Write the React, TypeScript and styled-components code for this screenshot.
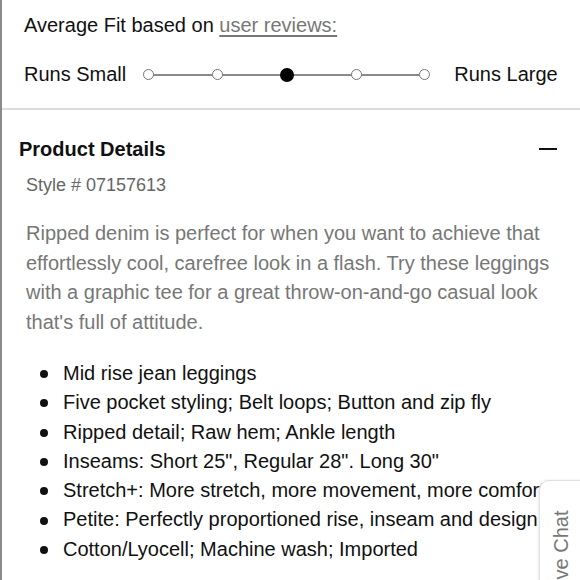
import styled, { createGlobalStyle } from "styled-components";

const GlobalStyle = createGlobalStyle`
  body {
    margin: 0;
    background: #ffffff;
    font-family: "Liberation Sans", Arial, sans-serif;
  }
`;

const Page = styled.div`
  position: relative;
  width: 580px;
  height: 580px;
  overflow: hidden;
  border-left: 2px solid #8a8a8a;
  box-sizing: border-box;
`;

const FitSection = styled.section`
  padding: 13px 0 0 22px;
  height: 110px;
  box-sizing: border-box;
  border-bottom: 2px solid #dcdcdc;
`;

const FitTitle = styled.div`
  font-size: 20px;
  color: #111;
  line-height: 24px;
`;

const ReviewLink = styled.a`
  color: #777;
  text-decoration: underline;
  text-underline-offset: 3px;
`;

const FitRow = styled.div`
  display: flex;
  align-items: center;
  margin-top: 26px;
  font-size: 20px;
  color: #111;
`;

const Scale = styled.div`
  position: relative;
  display: flex;
  justify-content: space-between;
  align-items: center;
  width: 287px;
  margin: 0 24px 0 17px;
  &::before {
    content: "";
    position: absolute;
    left: 5px;
    right: 5px;
    top: 50%;
    height: 2px;
    margin-top: -1px;
    background: #8a8a8a;
  }
`;

const Dot = styled.span<{ $active?: boolean }>`
  position: relative;
  box-sizing: border-box;
  width: ${(p) => (p.$active ? 14 : 11)}px;
  height: ${(p) => (p.$active ? 14 : 11)}px;
  border-radius: 50%;
  background: ${(p) => (p.$active ? "#000" : "#fff")};
  border: ${(p) => (p.$active ? "none" : "1.5px solid #777")};
`;

const Details = styled.section`
  padding: 27px 0 0 17px;
`;

const DetailsHeader = styled.div`
  display: flex;
  justify-content: space-between;
  align-items: center;
  padding-right: 23px;
`;

const DetailsTitle = styled.h2`
  margin: 0;
  font-size: 20px;
  font-weight: 700;
  color: #111;
  line-height: 24px;
`;

const Minus = styled.span`
  width: 18px;
  height: 2px;
  background: #111;
`;

const StyleNo = styled.div`
  margin: 14px 0 0 7px;
  font-size: 18px;
  color: #666;
`;

const Description = styled.p`
  margin: 23px 20px 0 7px;
  font-size: 20px;
  line-height: 29.5px;
  color: #777;
`;

const Features = styled.ul`
  margin: 22px 0 0 0;
  padding: 0 0 0 44px;
  list-style: none;
  font-size: 20px;
  line-height: 29.3px;
  color: #111;
  white-space: nowrap;
`;

const Feature = styled.li`
  display: flex;
  align-items: center;
  &::before {
    content: "";
    flex: none;
    width: 8px;
    height: 8px;
    border-radius: 50%;
    background: #111;
    margin: 1px 15px 0 -23px;
  }
`;

const ChatTab = styled.div`
  position: absolute;
  left: 537px;
  top: 480px;
  width: 60px;
  height: 120px;
  background: #fff;
  border: 1px solid #e2e2e2;
  border-radius: 10px 0 0 0;
  box-shadow: -1px 0 3px rgba(0, 0, 0, 0.08);
`;

const ChatLabel = styled.span`
  position: absolute;
  left: 10px;
  top: 14px;
  transform-origin: left top;
  transform: rotate(-90deg) translateX(-100px);
  font-size: 20px;
  color: #777;
  white-space: nowrap;
`;

const features = [
  "Mid rise jean leggings",
  "Five pocket styling; Belt loops; Button and zip fly",
  "Ripped detail; Raw hem; Ankle length",
  'Inseams: Short 25", Regular 28". Long 30"',
  "Stretch+: More stretch, more movement, more comfort",
  "Petite: Perfectly proportioned rise, inseam and design",
  "Cotton/Lyocell; Machine wash; Imported",
];

const App = () => {
  return (
    <Page>
      <GlobalStyle />
      <FitSection>
        <FitTitle>
          Average Fit based on <ReviewLink>user reviews:</ReviewLink>
        </FitTitle>
        <FitRow>
          <span>Runs Small</span>
          <Scale>
            {[0, 1, 2, 3, 4].map((i) => (
              <Dot key={i} $active={i === 2} />
            ))}
          </Scale>
          <span>Runs Large</span>
        </FitRow>
      </FitSection>

      <Details>
        <DetailsHeader>
          <DetailsTitle>Product Details</DetailsTitle>
          <Minus />
        </DetailsHeader>
        <StyleNo>Style # 07157613</StyleNo>
        <Description>
          Ripped denim is perfect for when you want to achieve that
          effortlessly cool, carefree look in a flash. Try these leggings
          with a graphic tee for a great throw-on-and-go casual look
          that's full of attitude.
        </Description>
        <Features>
          {features.map((f) => (
            <Feature key={f}>{f}</Feature>
          ))}
        </Features>
      </Details>

      <ChatTab>
        <ChatLabel>Live Chat</ChatLabel>
      </ChatTab>
    </Page>
  );
};

export default App;
